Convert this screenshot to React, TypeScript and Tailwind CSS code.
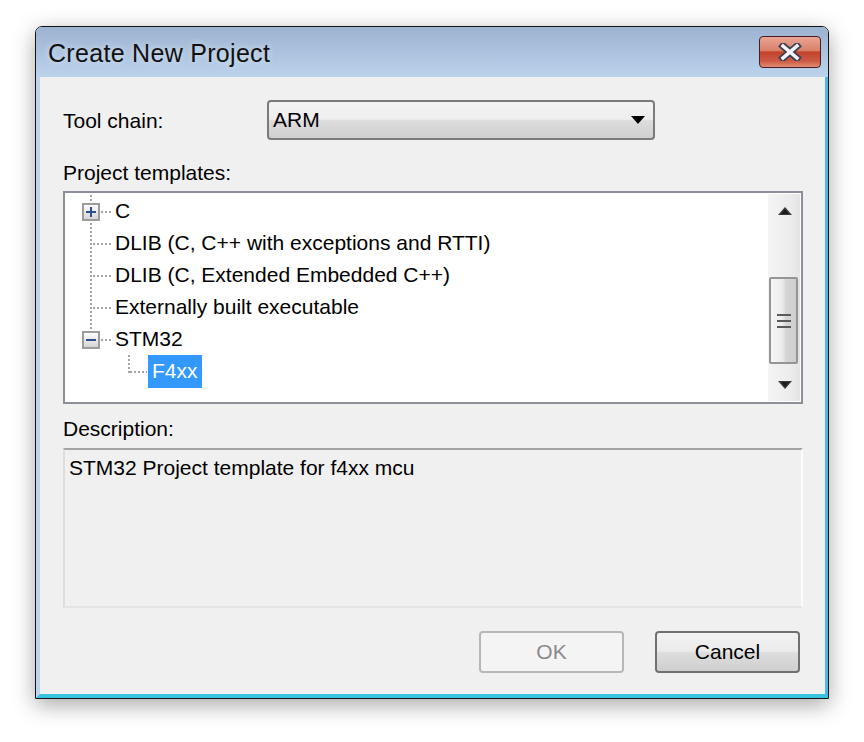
import React from 'react'

type Row = {
  label: string
  kind: 'plus' | 'minus' | 'leaf' | 'child'
  selected?: boolean
}

const rows: Row[] = [
  { label: 'C', kind: 'plus' },
  { label: 'DLIB (C, C++ with exceptions and RTTI)', kind: 'leaf' },
  { label: 'DLIB (C, Extended Embedded C++)', kind: 'leaf' },
  { label: 'Externally built executable', kind: 'leaf' },
  { label: 'STM32', kind: 'minus' },
  { label: 'F4xx', kind: 'child', selected: true },
]

const dot = { stroke: '#a3a3a3', strokeWidth: 2, strokeDasharray: '2 2' }

function ExpandBox({ open }: { open: boolean }) {
  return (
    <g>
      <defs>
        <linearGradient id="boxg" x1="0" y1="0" x2="0" y2="1">
          <stop offset="0" stopColor="#ffffff" />
          <stop offset="1" stopColor="#d2d2d2" />
        </linearGradient>
      </defs>
      <rect x="18" y="9" width="16" height="16" fill="url(#boxg)" stroke="#9c9c9c" strokeWidth="2" />
      <rect x="21" y="16" width="10" height="2" fill="#2b4f8f" />
      {!open && <rect x="25" y="12" width="2" height="10" fill="#2b4f8f" />}
    </g>
  )
}

function Gutter({ kind }: { kind: Row['kind'] }) {
  if (kind === 'child') {
    return (
      <svg width="83" height="32" className="shrink-0">
        <line x1="64" y1="0" x2="64" y2="18" {...dot} />
        <line x1="65" y1="17" x2="82" y2="17" {...dot} />
      </svg>
    )
  }
  return (
    <svg width="48" height="32" className="shrink-0">
      <line x1="26" y1="0" x2="26" y2={kind === 'minus' ? 9 : 32} {...dot} />
      {kind === 'leaf' ? (
        <line x1="28" y1="17" x2="46" y2="17" {...dot} />
      ) : (
        <>
          <line x1="36" y1="17" x2="46" y2="17" {...dot} />
          <ExpandBox open={kind === 'minus'} />
        </>
      )}
    </svg>
  )
}

function TreeRow({ row }: { row: Row }) {
  return (
    <div className="flex h-[32px] items-center">
      <Gutter kind={row.kind} />
      {row.selected ? (
        <span className="flex h-[33px] items-center bg-[#3399ff] px-[4px] text-white">{row.label}</span>
      ) : (
        <span className="ml-[2px] whitespace-nowrap">{row.label}</span>
      )}
    </div>
  )
}

function Arrow({ up }: { up?: boolean }) {
  return (
    <svg width="14" height="8" viewBox="0 0 14 8">
      <polygon points={up ? '7,0 14,8 0,8' : '0,0 14,0 7,8'} fill="#3a3a3a" />
      <polygon points={up ? '7,2 11,7 3,7' : '3,1 11,1 7,6'} fill="#1c1c1c" />
    </svg>
  )
}

function ScrollBar() {
  return (
    <div className="my-[1px] mr-[1px] flex w-[32px] flex-col bg-[linear-gradient(to_right,#f4f4f4,#ececec_70%,#e4e4e4)]">
      <div className="flex h-[33px] items-center justify-center pl-[2px]">
        <Arrow up />
      </div>
      <div className="h-[50px]" />
      <div className="mx-[1px] flex h-[87px] w-[29px] flex-col items-center justify-center gap-[4px] rounded-[2px] border-2 border-[#959595] bg-[linear-gradient(to_right,#f6f6f6,#ececec_45%,#d4d4d4_60%,#cfcfcf)]">
        <div className="h-[2px] w-[14px] bg-[#5a5a5a]" />
        <div className="h-[2px] w-[14px] bg-[#5a5a5a]" />
        <div className="h-[2px] w-[14px] bg-[#5a5a5a]" />
      </div>
      <div className="h-[5px]" />
      <div className="flex h-[32px] items-center justify-center pl-[2px]">
        <Arrow />
      </div>
    </div>
  )
}

function CloseIcon() {
  return (
    <svg width="24" height="18" viewBox="0 0 24 18">
      <path d="M5 3 L19 15 M19 3 L5 15" stroke="#3f3f55" strokeWidth="7" strokeLinecap="square" />
      <path d="M5 3 L19 15 M19 3 L5 15" stroke="#f4f4f6" strokeWidth="3.5" strokeLinecap="square" />
    </svg>
  )
}

export default function App() {
  return (
    <div className="h-[742px] w-[864px] bg-white pl-[35px] pt-[26px] font-['Liberation_Sans',Arial,sans-serif] text-[21px] leading-[24px] text-black">
      <div className="flex h-[673px] w-[794px] flex-col overflow-hidden rounded-t-[7px] border border-[#141414] shadow-[0_6px_22px_rgba(0,0,0,0.35)]">
        {/* title bar */}
        <div className="flex h-[50px] shrink-0 justify-between bg-[linear-gradient(to_bottom,#9cb3d1,#bbd3ec)] pl-[12px] pr-[7px]">
          <div className="pt-[12px] text-[25px] leading-[28px] tracking-[0.3px] text-[#111] [text-shadow:0_0_6px_rgba(255,255,255,0.6)]">
            Create New Project
          </div>
          <div className="mt-[9px] flex h-[32px] w-[62px] items-center justify-center rounded-[4px] border border-[#4b1b26] bg-[linear-gradient(to_bottom,#eaa595,#d98068_45%,#c2432c_50%,#cc5a43_80%,#e08c74)]">
            <CloseIcon />
          </div>
        </div>

        {/* client area */}
        <div className="flex flex-1 border-b-4 border-l-4 border-r-[3px] border-b-[#38c3df] border-l-[#bfd4ec] border-r-[#4ab9e9]">
          <div className="flex flex-1 flex-col bg-[#f0f0f0] pl-[23px] pr-[22px] pt-[23px]">
            <div className="flex h-[40px] items-center">
              <div className="w-[204px] pt-[1px]">Tool chain:</div>
              <div className="flex h-[40px] w-[388px] items-center justify-between rounded-[4px] border-2 border-[#7b7b7b] bg-[linear-gradient(to_bottom,#f3f3f3,#eeeeee_48%,#dcdcdc_52%,#d0d0d0)] pl-[4px] pr-[8px]">
                <span>ARM</span>
                <svg width="14" height="8" viewBox="0 0 14 8">
                  <polygon points="0,0 14,0 7,8" fill="#000" />
                </svg>
              </div>
            </div>

            <div className="mt-[21px]">Project templates:</div>
            <div className="mt-[6px] flex h-[213px] w-[740px] border-2 border-[#8b9098] bg-white">
              <div className="flex-1 overflow-hidden pt-[2px]">
                {rows.map((r) => (
                  <TreeRow key={r.label} row={r} />
                ))}
              </div>
              <ScrollBar />
            </div>

            <div className="mt-[13px]">Description:</div>
            <div className="mt-[7px] h-[160px] w-[740px] border-2 border-b-[#e4e4e4] border-l-[#dcdce2] border-r-[#fbfbfb] border-t-[#a3a3a3] pl-[4px] pt-[6px]">
              STM32 Project template for f4xx mcu
            </div>

            <div className="mt-[23px] flex justify-end gap-[31px] pr-[3px]">
              <button className="flex h-[42px] w-[145px] items-center justify-center rounded-[4px] border-2 border-[#b4b8bb] bg-[#f4f4f4] text-[#8a8a8a]">
                OK
              </button>
              <button className="flex h-[42px] w-[145px] items-center justify-center rounded-[4px] border-2 border-[#707070] bg-[linear-gradient(to_bottom,#f2f2f2,#ebebeb_48%,#dddddd_52%,#cfcfcf)]">
                Cancel
              </button>
            </div>
          </div>
        </div>
      </div>
    </div>
  )
}
